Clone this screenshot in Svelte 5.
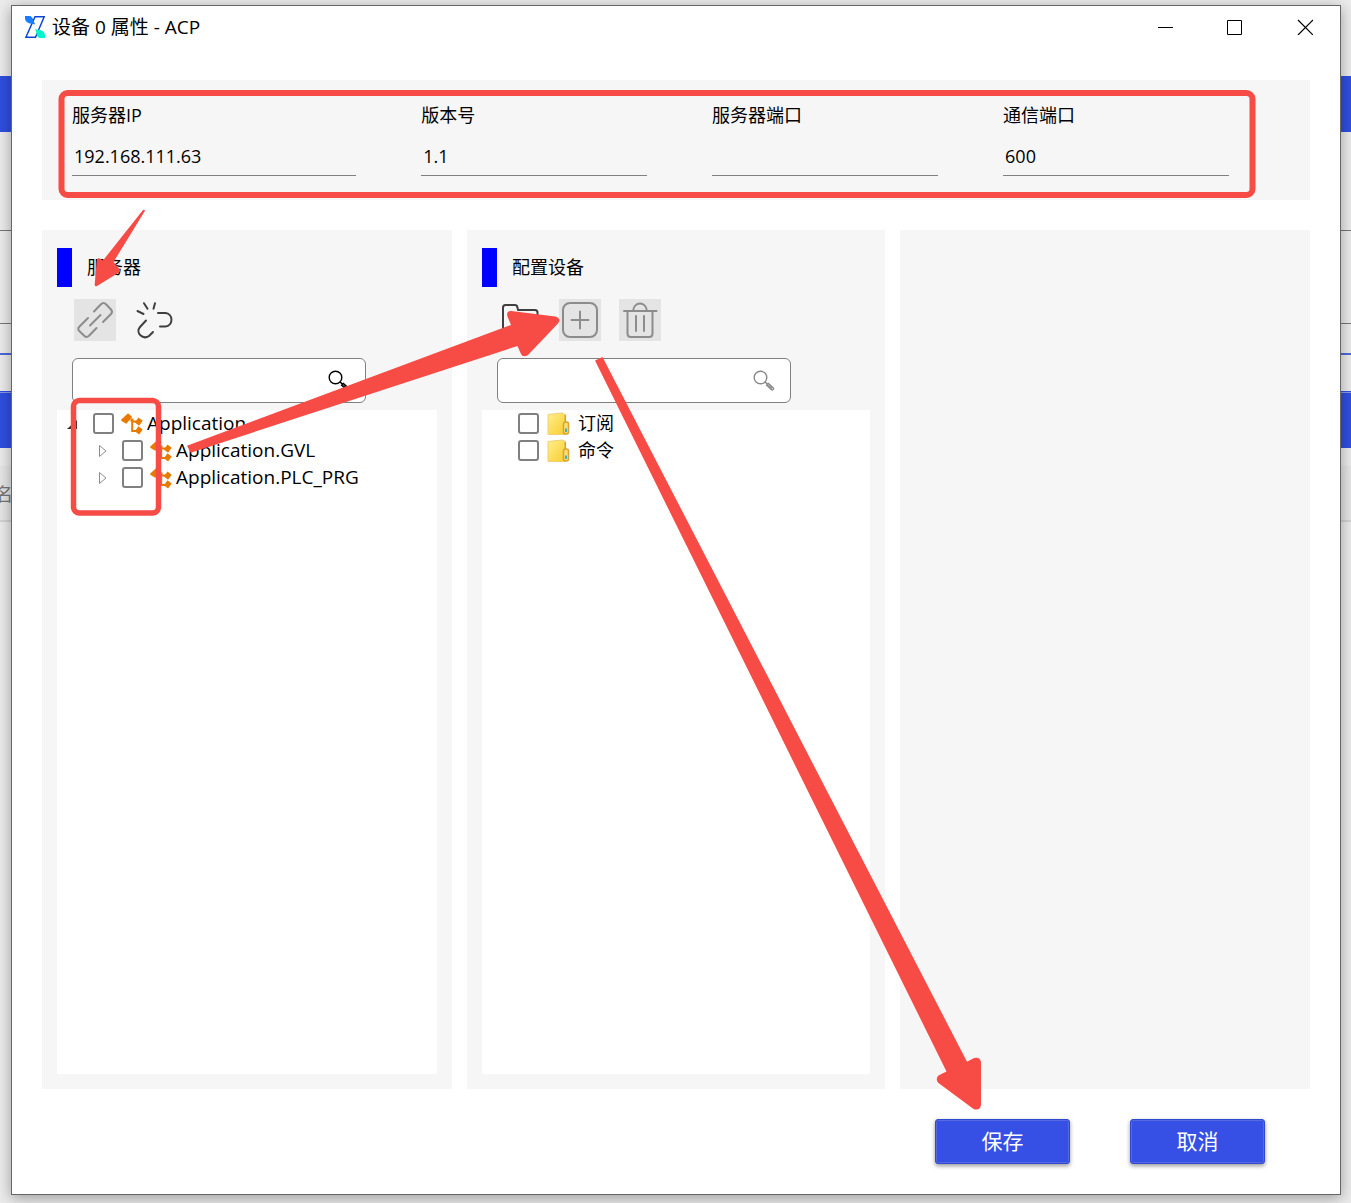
<script lang="ts">
  type Field = { id: string; label: string; value: string };
  type Node = { name: string; level: number; expander: 'open' | 'closed' | 'none'; icon: 'module' | 'folder' };

  let fields = $state<Field[]>([
    { id: 'server-ip', label: '服务器IP', value: '192.168.111.63' },
    { id: 'version', label: '版本号', value: '1.1' },
    { id: 'server-port', label: '服务器端口', value: '' },
    { id: 'comm-port', label: '通信端口', value: '600' },
  ]);

  const serverNodes: Node[] = [
    { name: 'Application', level: 0, expander: 'open', icon: 'module' },
    { name: 'Application.GVL', level: 1, expander: 'closed', icon: 'module' },
    { name: 'Application.PLC_PRG', level: 1, expander: 'closed', icon: 'module' },
  ];
  const deviceNodes: Node[] = [
    { name: '订阅', level: 0, expander: 'none', icon: 'folder' },
    { name: '命令', level: 0, expander: 'none', icon: 'folder' },
  ];
</script>

{#snippet search(label: string, muted: boolean)}
  <div class="search">
    <input type="text" aria-label={label} />
    <button type="button" aria-label="搜索" class:muted>
      <svg width="22" height="22" viewBox="0 0 22 22" fill="none" stroke="currentColor">
        <circle cx="7.5" cy="7.5" r="6.3" stroke-width="1.4" />
        <path d="M12 12l2.6 2.2" stroke-width="1.6" />
        <path d="M13.6 15.2l1.8-1.8 5 4.6c.8.8-.9 2.6-1.8 1.8z" stroke-width="1.4" />
        <path d="M15.500 15.300l3.500 3.200" stroke-width="1.2" />
      </svg>
    </button>
  </div>
{/snippet}

{#snippet tree(nodes: Node[])}
  <ul class="tree">
    {#each nodes as node (node.name)}
      <li class:child={node.level === 1} class:module={node.icon === 'module'}>
        <span class="expander">
          {#if node.expander === 'open'}
            <svg width="14" height="14" viewBox="0 0 14 14"><path d="M11 3v9H1z" fill="#262626" /></svg>
          {:else if node.expander === 'closed'}
            <svg width="10" height="14" viewBox="0 0 10 14"><path d="M2.500 1.500v11L9 7z" fill="#fff" stroke="#8c8c8c" /></svg>
          {/if}
        </span>
        <label>
          <input type="checkbox" />
          {#if node.icon === 'module'}
            <svg width="22" height="22" viewBox="0 0 22 22" fill="#e87a00">
              <path d="M6.500.8q.6-.6 1.200 0l3 2.600q.7.700 0 1.400L5.800 10.300q-.7.700-1.400 0L.6 8q-.8-.7-.3-1.500z" />
              <path d="M9.500 5.500h3v3.300h-3z" />
              <path d="M11 8.500h6M11.200 8.500v9.500H15" fill="none" stroke="#e87a00" stroke-width="2" />
              <path d="M17.500 4.600l4.200 3.200-3.600 5-4.200-3.200zM17.500 13.200l4.200 3.200-3.600 5-4.200-3.200z" />
            </svg>
          {:else}
            <svg width="23" height="24" viewBox="0 0 23 24">
              <path d="M1 2.500L15 1l3.500 1.500V22.500H1z" fill="url(#folder-fill)" stroke="#f2cf74" />
              <path d="M18.300 3v8" stroke="#d9a520" stroke-width="1.600" />
              <rect x="16.500" y="10" width="5" height="12" rx="2" fill="#f9df7c" stroke="#dba32a" stroke-width="1.500" />
              <path d="M19 16.500v3.500" stroke="#3cb4c4" stroke-width="2" />
            </svg>
          {/if}
          <span>{node.name}</span>
        </label>
      </li>
    {/each}
  </ul>
{/snippet}

<div class="desktop">
  <div class="backdrop" aria-hidden="true">
    <i class="blank top"></i>
    <i class="band"></i>
    <i class="blank tall"></i>
    <i class="blank mid"></i>
    <i class="blank low"></i>
    <i class="blank thin"></i>
    <i class="band lower"></i>
    <i class="blank strip"></i>
    <div class="column-head">名</div>
  </div>

  <main class="dialog">
    <header class="titlebar">
      <svg width="20" height="22" viewBox="0 0 20 22">
        <path d="M10 .8h9.200L10.500 21.200H.9z" fill="#fff" stroke="#0a46d2" stroke-width="1.500" />
        <path d="M0 0h5.500q3 2 3 5l1.800 3.500-2.500-.5Q1 7.500 0 3z" fill="#1a7cff" />
        <path d="M10 13l3 .8q5.500 0 7 5V22h-5.500q-3.500-2-3-5.500z" fill="#00f5c8" />
      </svg>
      <h1>设备 0 属性 - ACP</h1>
      <div class="window-buttons">
        <button type="button" aria-label="最小化">
          <svg width="16" height="16" viewBox="0 0 16 16" stroke="#000"><path d="M1 8.500h15" /></svg>
        </button>
        <button type="button" aria-label="最大化">
          <svg width="16" height="16" viewBox="0 0 16 16" stroke="#000" fill="none"><path d="M.5 1.500h14v14H.5z" /></svg>
        </button>
        <button type="button" aria-label="关闭">
          <svg width="16" height="16" viewBox="0 0 16 16" stroke="#000" stroke-width="1.200"><path d="M1 1l15 15M16 1L1 16" /></svg>
        </button>
      </div>
    </header>

    <div class="body">
      <section class="fields">
        {#each fields as field (field.id)}
          <div class="field">
            <label for={field.id}>{field.label}</label>
            <input id={field.id} type="text" bind:value={field.value} />
          </div>
        {/each}
      </section>

      <div class="panels">
        <section class="panel">
          <h2>服务器</h2>
          <div class="toolbar">
            <button type="button" aria-label="连接" disabled>
              <svg width="42" height="42" viewBox="0 0 42 42">
                <path d="M20 12.500L27 5.300Q29.500 2.800 32 5.300L37 10.500Q39 12.800 37 15L29 23M14 19L5.500 27.500Q3 30 5.500 32.300L10.500 37Q12.500 39 15 36.800L22.500 29M16 26.500L26.500 16" />
              </svg>
            </button>
            <button type="button" aria-label="断开">
              <svg width="42" height="42" viewBox="0 0 42 42">
                <path d="M3.500 12l6 3M10 4.200l3.500 5.500M21 4.200l-1.500 5.500M24 14h7.500a6.800 6.800 0 0 1 0 13.500H26M12 21.500L6 28c-5 6 3 13 9 9l4-4" />
              </svg>
            </button>
          </div>
          {@render search('搜索服务器', false)}
          {@render tree(serverNodes)}
        </section>

        <section class="panel">
          <h2>配置设备</h2>
          <div class="toolbar">
            <button type="button" aria-label="打开">
              <svg width="42" height="42" viewBox="0 0 42 42">
                <path d="M4 33V8.500Q4 6 6.500 6H16q2 0 2.500 2.500l.5 2.500h17q2.500 0 2.500 2.500V33q0 2.500-2.500 2.500H6.500Q4 35.500 4 33z" />
              </svg>
            </button>
            <button type="button" aria-label="添加" disabled>
              <svg width="42" height="42" viewBox="0 0 42 42">
                <rect x="4" y="4" width="34" height="34" rx="7" />
                <path d="M21 12.500v17M12.500 21h17" />
              </svg>
            </button>
            <button type="button" aria-label="删除" disabled>
              <svg width="42" height="42" viewBox="0 0 42 42">
                <path d="M5 12h32.500M8.500 12v22.500q0 3.500 3.500 3.500h18q3.500 0 3.500-3.500V12M14 12c1-10 13-10 14 0M17 17v15M25 17v15" />
              </svg>
            </button>
          </div>
          {@render search('搜索配置设备', true)}
          {@render tree(deviceNodes)}
        </section>

        <section class="panel" aria-label="详细信息"></section>
      </div>

      <footer>
        <button type="button">保存</button>
        <button type="button">取消</button>
      </footer>
    </div>
  </main>

  <svg class="annotations" viewBox="0 0 1351 1203" preserveAspectRatio="xMinYMin" aria-hidden="true">
    <defs>
      <linearGradient id="folder-fill" x1="0" y1="0" x2="1" y2="1">
        <stop offset="0" stop-color="#fff08c" />
        <stop offset="1" stop-color="#f8cc30" />
      </linearGradient>
    </defs>
    <g fill="none" stroke="#f74b46">
      <rect x="61.500" y="93" width="1191" height="102" rx="6" stroke-width="6" />
      <rect x="73.500" y="400.500" width="85" height="112.500" rx="6" stroke-width="5.500" />
    </g>
    <g fill="#f74b46">
      <path d="M143 210q1.500-1 2 .8L113.500 262l6 7q1.500 2-.5 3.500L97 286q-2.500 1-2.300-1.500L96.800 260q.5-2.500 3-1.500l3.200 2z" />
      <path d="M187 445.700L511 325l-3.700-9q-1-5 4-5l44 5.500q7 2.500 2.200 7.500L528 355q-5 3-7-1l-3.500-8L190.700 452.700z" />
      <path d="M595 360.500L602.500 357 967 1061.700l7-3.700q6-1.500 7 4v43q-1 6-7.500 4l-35-26q-3.500-4 0-7.500l8-4z" />
    </g>
  </svg>
</div>

<style>
  :global(body) {
    margin: 0;
  }
  .desktop,
  .desktop * {
    box-sizing: border-box;
  }
  .desktop {
    position: relative;
    display: flex;
    min-height: 100vh;
    padding: 5px 10px 8px 11px;
    overflow: hidden;
    background: #ececec;
    color: #000;
    font: 18px/24px 'Open Sans', 'Noto Sans CJK SC', sans-serif;
  }
  button,
  input {
    font: inherit;
    color: inherit;
  }
  svg {
    display: block;
    flex: none;
  }

  .backdrop {
    position: absolute;
    inset: 0;
    display: flex;
    flex-direction: column;
  }
  .blank {
    border-bottom: 1px solid #777;
  }
  .top {
    height: 76px;
    border: 0;
  }
  .band {
    height: 56px;
    background: #304fe0;
  }
  .tall {
    height: 99px;
  }
  .mid {
    height: 93px;
  }
  .low {
    height: 31px;
    border-bottom: 2px solid #5068dc;
  }
  .thin {
    height: 37px;
    border-color: #304fe0;
  }
  .lower {
    border-top: 1px solid #8c9ae6;
  }
  .strip {
    height: 18px;
    border: 0;
  }
  .column-head {
    height: 56px;
    padding: 16px 0;
    border-bottom: 2px solid #d4d4d4;
    background: #e6e6e6;
    color: #777;
    text-indent: -5px;
  }

  .dialog {
    position: relative;
    flex: 1;
    min-width: 0;
    display: flex;
    flex-direction: column;
    border: 1px solid #666;
    background: #fff;
    box-shadow: 0 3px 14px rgba(0, 0, 0, 0.35);
  }
  .titlebar {
    display: flex;
    align-items: center;
    gap: 7px;
    height: 42px;
    padding-left: 13px;
  }
  h1 {
    flex: 1;
    margin: 0;
    font-size: 19px;
    font-weight: 400;
  }
  .window-buttons {
    display: flex;
  }
  .window-buttons button {
    display: grid;
    place-items: center;
    width: 70px;
    height: 42px;
    padding: 0;
    border: 0;
    background: none;
  }

  .body {
    flex: 1;
    display: flex;
    flex-direction: column;
    gap: 30px;
    padding: 32px 30px 30px;
  }
  .fields {
    display: grid;
    grid-template-columns: 6fr 5fr 5fr 5fr;
    height: 120px;
    padding: 23px 16px 24px 30px;
    background: #f6f6f6;
  }
  .field {
    display: flex;
    flex-direction: column;
    gap: 12px;
    padding-right: 65px;
  }
  .field input {
    width: 100%;
    height: 37px;
    padding: 0 2px 2px;
    border: 0;
    border-bottom: 1px solid #808080;
    background: none;
  }

  .panels {
    flex: 1;
    display: grid;
    grid-template-columns: 205fr 209fr 205fr;
    gap: 15px;
  }
  .panel {
    display: flex;
    flex-direction: column;
    min-width: 0;
    padding: 18px 15px 15px;
    background: #f6f6f6;
  }
  h2 {
    margin: 0;
    padding-left: 15px;
    border-left: 15px solid #00f;
    font-size: 18px;
    font-weight: 400;
    line-height: 39px;
  }
  .toolbar {
    display: flex;
    gap: 18px;
    margin: 12px 0 17px;
    padding-left: 17px;
  }
  .toolbar button {
    padding: 0;
    border: 0;
    background: none;
    color: #404040;
  }
  .toolbar button:disabled {
    background: #e4e4e4;
    color: #8c8c8c;
  }
  .toolbar svg {
    fill: none;
    stroke: currentColor;
    stroke-width: 2;
    stroke-linecap: round;
    stroke-linejoin: round;
  }
  .search {
    display: flex;
    align-items: center;
    width: 294px;
    max-width: 100%;
    height: 45px;
    margin-left: 15px;
    padding-right: 15px;
    border: 1px solid #808080;
    border-radius: 6px;
    background: #fff;
  }
  .search input {
    flex: 1;
    min-width: 0;
    height: 100%;
    padding: 0 8px;
    border: 0;
    background: none;
  }
  .search button {
    padding: 0;
    border: 0;
    background: none;
  }
  .search .muted {
    color: #888;
  }

  .tree {
    flex: 1;
    margin: 7px 0 0;
    padding: 0;
    background: #fff;
    list-style: none;
  }
  li {
    display: flex;
    align-items: center;
    gap: 10px;
    height: 27px;
    padding-left: 6px;
  }
  .child {
    padding-left: 35px;
  }
  .expander {
    display: grid;
    place-items: center;
    width: 20px;
  }
  li label {
    display: flex;
    align-items: center;
    gap: 8px;
  }
  li label span {
    padding-bottom: 2px;
    white-space: nowrap;
  }
  li.module label {
    gap: 7px;
  }
  li.module label span {
    margin-left: -3px;
    font-size: 19px;
  }
  li input {
    appearance: none;
    width: 21px;
    height: 21px;
    margin: 0;
    border: 2px solid #808080;
    border-radius: 3px;
    background: #fff;
  }

  footer {
    display: flex;
    justify-content: flex-end;
    gap: 60px;
    padding-right: 45px;
  }
  footer button {
    width: 135px;
    height: 45px;
    padding: 0 0 2px;
    border: 1px solid #3049d0;
    border-radius: 3px;
    background: #364fe4;
    box-shadow: 0 2px 4px rgba(0, 0, 0, 0.4), inset 0 0 0 1px #5569e0;
    color: #fff;
    font-size: 21px;
  }

  .annotations {
    position: absolute;
    top: 0;
    left: 0;
    width: 100%;
    pointer-events: none;
  }
</style>
